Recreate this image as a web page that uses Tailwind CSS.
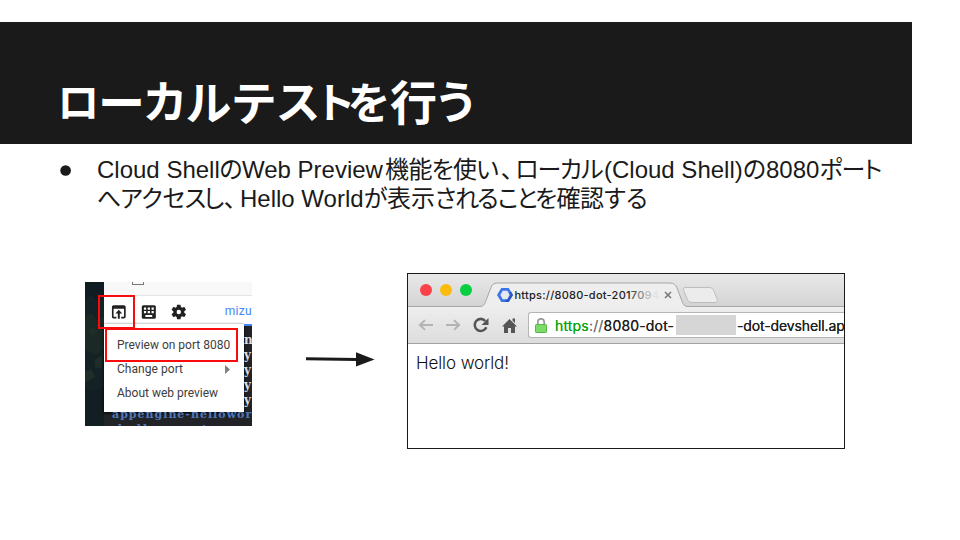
<!DOCTYPE html>
<html lang="ja">
<head>
<meta charset="utf-8">
<title>ローカルテストを行う</title>
<script src="https://cdn.jsdelivr.net/npm/@tailwindcss/browser@4"></script>
</head>
<body class="bg-white">
<main class="w-[960px] h-[540px] overflow-hidden bg-white text-[#1a1a1a] font-['Liberation_Sans','Noto_Sans_CJK_JP',sans-serif]">
  <header class="mt-[22px] w-[912px] h-[122px] bg-[#1a1a1a] pl-[60px] pt-[47px] flex items-start">
    <h1 class="text-white font-bold text-[47px] leading-[70px] whitespace-nowrap flex [font-feature-settings:'palt']">
      <span class="w-[37px] flex justify-center text-[42px]">ロ</span><span class="w-[49px] flex justify-center">ー</span><span class="w-[38px] flex justify-center text-[45px]">カ</span><span class="w-[49px] flex justify-center text-[46px]">ル</span><span class="w-[42px] flex justify-center text-[46px]">テ</span><span class="w-[47px] flex justify-center text-[45px]">ス</span><span class="w-[28px] flex justify-center text-[42px]">ト</span><span class="w-[37px] flex justify-center text-[43px]">を</span><span class="w-[53px] flex justify-center">行</span><span class="w-[31px] flex justify-center text-[45px]">う</span>
    </h1>
  </header>

  <section class="flex pl-[60px] pt-[11px] h-[129px] text-[24px] leading-[29px]">
    <span class="w-[37px] shrink-0 flex pt-[10px]"><svg class="w-3 h-3" viewBox="0 0 12 12"><circle cx="5.6" cy="5.5" r="5.3" fill="#1a1a1a"/></svg></span>
    <div class="whitespace-nowrap [font-feature-settings:'palt']">
      <p class="h-[29px] flex"><span class="w-[123px]">Cloud Shell</span><span class="w-[22px] flex justify-center">の</span><span class="w-[143px]">Web Preview</span><span class="w-[47px] flex justify-center tracking-[-0.5px]">機能</span><span class="w-[21px] flex justify-center">を</span><span class="w-[24px] flex justify-center">使</span><span class="w-[21px] flex justify-center">い</span><span class="w-[18px] pl-[3px]">、</span><span class="w-[22px] flex justify-center">ロ</span><span class="w-[23px] flex justify-center">ー</span><span class="w-[20px] flex justify-center">カ</span><span class="w-[23px] flex justify-center">ル</span><span class="w-[139px]">(Cloud Shell)</span><span class="w-[23px] flex justify-center">の</span><span class="w-[54px]">8080</span><span class="w-[22px] flex justify-center">ポ</span><span class="w-[23px] flex justify-center">ー</span><span class="w-[16px] flex justify-center">ト</span></p>
      <p class="h-[29px] flex"><span class="w-[24px] flex justify-center">へ</span><span class="w-[21px] flex justify-center">ア</span><span class="w-[20px] flex justify-center">ク</span><span class="w-[24px] flex justify-center">セ</span><span class="w-[19px] flex justify-center">ス</span><span class="w-[18px] flex justify-center">し</span><span class="w-[17px] pl-[1px]">、</span><span class="w-[124px]">Hello World</span><span class="w-[23px] flex justify-center">が</span><span class="w-[48px]">表示</span><span class="w-[21px] flex justify-center">さ</span><span class="w-[22px] flex justify-center">れ</span><span class="w-[20px] flex justify-center">る</span><span class="w-[20px] flex justify-center">こ</span><span class="w-[18px] flex justify-center">と</span><span class="w-[20px] flex justify-center">を</span><span class="w-[48px] flex justify-center tracking-[-0.5px]">確認</span><span class="w-[22px] flex justify-center">す</span><span class="w-[22px] flex justify-center">る</span></p>
    </div>
  </section>

  <section class="flex items-start pl-[85px]">
    <!-- Cloud Shell toolbar and preview menu -->
    <div class="relative mt-[9px] w-[167px] h-[144px] overflow-hidden bg-[#222326] flex">
      <div class="w-[19px] h-full shrink-0">
        <svg class="w-[19px] h-[144px]" viewBox="0 0 20 144" preserveAspectRatio="none"><rect width="20" height="144" fill="#142225"/><path d="M0 0h20v14l-8 4-6-5-6 7z" fill="#0f1d22"/><path d="M0 35l7-4 5 7 8-3v32l-9 6-11-5z" fill="#1a2926"/><path d="M3 48l6-4 4 6-5 5zM10 78l8-5v12l-7 2zM0 90l6-3 5 8-11 5z" fill="#1f2e29"/><path d="M0 105l8 4 12-5v40H0z" fill="#121e22"/></svg>
      </div>
      <div class="flex-1 min-w-0">
        <div class="h-[14px] bg-[#f8f8f8] border-b border-[#e4e4e4] pl-[28px]"><div class="w-[12px] h-[3px] border-b-[1.5px] border-x border-[#777]"></div></div>
        <div class="h-[28px] bg-white flex items-center text-[#212121]">
          <svg class="ml-[7px] mt-[3px] w-4 h-4" viewBox="0 0 16 16"><path d="M5.500 13.800H2.800a1 1 0 0 1-1-1V3a1 1 0 0 1 1-1h10.400a1 1 0 0 1 1 1v9.800a1 1 0 0 1-1 1h-2.700" fill="none" stroke="#212121" stroke-width="1.700"/><path d="M1.500 2h13v2.600h-13zM8 5.800l3.500 3.700H9v5.300H7V9.500H4.500z" fill="#212121"/></svg>
          <svg class="ml-[14px] mt-[3px] w-4 h-4" viewBox="0 0 16 16"><rect x=".8" y="1" width="14.400" height="14" rx="1.600" fill="#212121"/><path d="M3 3.300h2.300v2.300H3zM6.900 3.300h2.300v2.300H6.900zM10.800 3.300h2.300v2.300h-2.300zM3 7h2.300v2.300H3zM6.900 7h2.300v2.300H6.900zM10.800 7h2.300v2.300h-2.300zM4.500 11.100h7v1.900h-7z" fill="white"/></svg>
          <svg class="ml-[14px] mt-[3px] w-[18px] h-[18px]" viewBox="0 0 24 24" fill="currentColor"><path d="M19.430 12.980c.04-.32.07-.64.07-.98s-.03-.66-.07-.98l2.110-1.650c.19-.15.24-.42.12-.64l-2-3.460c-.12-.22-.39-.3-.61-.22l-2.490 1c-.52-.4-1.080-.73-1.690-.98l-.38-2.650A.488.488 0 0 0 14 2h-4c-.25 0-.46.18-.49.420l-.38 2.650c-.61.250-1.170.590-1.690.980l-2.490-1c-.23-.09-.49 0-.61.220l-2 3.460c-.13.220-.07.490.12.640l2.110 1.650c-.04.320-.07.650-.07.980s.03.660.07.980l-2.110 1.650c-.19.150-.24.420-.12.640l2 3.460c.12.220.39.300.61.220l2.490-1c.52.400 1.080.730 1.690.980l.38 2.650c.03.240.24.420.49.420h4c.25 0 .46-.18.49-.42l.38-2.650c.61-.25 1.170-.59 1.690-.98l2.490 1c.23.090.49 0 .61-.22l2-3.460c.12-.22.07-.49-.12-.64zM12 15a3 3 0 1 1 0-6 3 3 0 0 1 0 6z"/></svg>
          <span class="ml-[37px] mt-px font-[Roboto] text-[12px] tracking-[.3px] text-[#4285f4]">mizu</span>
        </div>
        <div class="h-[88px] flex">
          <div class="w-[140px] h-[88px] shrink-0 bg-white shadow-[0_1px_3px_#000] pl-[13px] pt-[9px] font-[Roboto] text-[12px] leading-[24px] text-[#3d3d3d]">
            <p class="whitespace-nowrap">Preview on port 8080</p>
            <p class="flex items-center justify-between pr-[14px] tracking-[.05px]">Change port<svg class="w-[5px] h-[9px]" viewBox="0 0 5 9"><path d="M0 0l5 4.500L0 9z" fill="#808080"/></svg></p>
            <p>About web preview</p>
          </div>
          <div class="w-[8px] h-[88px] overflow-hidden font-['DejaVu_Serif'] font-bold text-[12px] leading-[15px] text-[#ddd] pt-[7px] border-t-2 border-[#4285f4]"><p>n</p><p>y</p><p>y</p><p>y</p><p>y</p></div>
        </div>
        <div class="h-[14px] overflow-hidden pl-[8px] font-['DejaVu_Serif'] font-bold text-[11px] leading-[13px] text-[#5078bd] whitespace-nowrap"><p class="-mt-[4px] tracking-[1px]">appengine-hellowor</p><p class="mt-[2px] tracking-[2px]">.hello.mvn.t</p></div>
      </div>
      <div class="absolute left-[13px] top-[13px] w-[37px] h-[34px] border-2 border-[#fa0c0c]"></div>
      <div class="absolute left-[20px] top-[46px] w-[133px] h-[34px] border-2 border-[#fa0c0c]"></div>
    </div>

    <svg class="ml-[54px] mt-[78px] w-[69px] h-[16px]" viewBox="0 0 69 16"><path d="M0 7.800L51 8.500" stroke="#1a1a1a" stroke-width="3"/><path d="M50 1.300L68.500 8.600 50 15.500z" fill="#1a1a1a"/></svg>

    <!-- Browser window -->
    <div class="ml-[32px] w-[438px] h-[176px] border border-[#1a1a1a] bg-white overflow-hidden">
      <div class="relative h-[33px] bg-gradient-to-b from-[#e9e9e9] to-[#d3d3d3]">
        <svg class="absolute inset-0 w-[436px] h-[33px]" viewBox="0 0 436 33"><path d="M0 32.500h72c4 0 5-3 6-6l5-13c1-3 3-4.500 6-4.500h173c4 0 6 2 7 5l5 13c1 4 3 5.500 6 5.500h156v1H0z" fill="#eee"/><path d="M0 32.500h72c4 0 5-3 6-6l5-13c1-3 3-4.500 6-4.500h173c4 0 6 2 7 5l5 13c1 4 3 5.500 6 5.500h156" fill="none" stroke="#a6a6a6"/><path d="M279 13.500h24c3 0 4 1 5 4l3 7c1 3 0 4-2 4h-22c-3 0-5-1-6-4l-3-7c-1-3-1-4 1-4z" transform="translate(-2 0)" fill="#ececec" stroke="#bdbdbd"/></svg>
        <div class="relative flex items-center h-[33px] pl-[11.500px]">
          <div class="flex gap-[8px] -mt-px"><i class="w-[12px] h-[12px] rounded-full bg-[#fc4148]"></i><i class="w-[12px] h-[12px] rounded-full bg-[#fdbc0c]"></i><i class="w-[12px] h-[12px] rounded-full bg-[#08cf41]"></i></div>
          <svg class="ml-[25px] mt-[9px] w-[16px] h-[14px]" viewBox="0 0 16 14"><path d="M4.300 0h7.400L16 7l-4.300 7H4.300L0 7z" fill="#3974e8"/><path d="M9 14h2.700L16 7l-2-3.500L8 13z" fill="#2a56c6"/><path d="M5.700 2.800h4.600L12.700 7l-2.400 4.200H5.700L3.300 7z" fill="#e5e8ee"/></svg>
          <span class="ml-[2px] mt-[9px] w-[145px] font-[Inter] font-medium text-[11px] tracking-[.25px] text-[#222] whitespace-nowrap">https://8080-dot-201<span class="text-[#555]">7</span><span class="text-[#888]">0</span><span class="text-[#bbb]">9</span><span class="text-[#e2e2e2]">4</span></span>
          <svg class="ml-[4px] mt-[9px] w-[8px] h-[8px]" viewBox="0 0 8 8"><path d="M1 1l6 6M7 1L1 7" stroke="#777" stroke-width="1.500"/></svg>
        </div>
      </div>
      <div class="h-[37px] bg-gradient-to-b from-[#eeeeee] to-[#dcdcdc] border-b border-[#a3a3a3] flex items-center pl-[10px]">
        <svg class="w-[15px] h-[12px]" viewBox="0 0 16 12" fill="none" stroke="#b3b3b3" stroke-width="2"><path d="M16 6H2M7.500 .8L2 6l5.500 5.200"/></svg>
        <svg class="ml-[13px] w-[15px] h-[12px]" viewBox="0 0 16 12" fill="none" stroke="#b3b3b3" stroke-width="2"><path d="M0 6h14M8.500 .8L14 6l-5.500 5.200"/></svg>
        <svg class="ml-[12px] w-[16px] h-[16px]" viewBox="0 0 16 16"><path d="M13.300 10.200A6 6 0 1 1 12.300 4" fill="none" stroke="#555" stroke-width="2.600"/><path d="M15.500 1v7H8.500z" fill="#555"/></svg>
        <svg class="ml-[13px] w-[15px] h-[15px]" viewBox="0 0 15 15" fill="#555"><path d="M7.500 1L15 8.500h-2V15H9v-5H6v5H2V8.500H0zM10.500 .5h2.500v4.500l-2.500-2.500z"/></svg>
        <div class="ml-[11px] flex-1 min-w-0 h-[26px] rounded-l-[3px] border border-r-0 border-[#b5b5b5] bg-white flex items-center whitespace-nowrap font-[Inter] text-[14px] text-[#222] [text-shadow:0_0_.3px_currentColor]">
          <svg class="ml-[6px] shrink-0 w-[12px] h-[15px]" viewBox="0 0 12 15"><path d="M2.800 8V4a3.200 3.200 0 0 1 6.400 0v4" fill="none" stroke="#999" stroke-width="1.700"/><rect x=".5" y="6.500" width="11" height="8" rx=".8" fill="#7ddc68" stroke="#57b449"/></svg>
          <span class="ml-[8px] w-[121px] shrink-0 tracking-[.17px]"><span class="text-[#12a512]">https</span><span class="text-[#777]">://</span>8080-dot-</span>
          <span class="w-[60px] h-[20px] shrink-0 bg-[#d6d6d6]"></span>
          <span class="ml-[1px] tracking-[-.12px]">-dot-devshell.ap</span>
        </div>
      </div>
      <p class="pl-[8px] pt-[6px] text-[17px] leading-[26px] tracking-[-.1px] font-[350] font-['Inter',sans-serif] text-[#111]">Hello world!</p>
    </div>
  </section>
</main>
</body>
</html>
